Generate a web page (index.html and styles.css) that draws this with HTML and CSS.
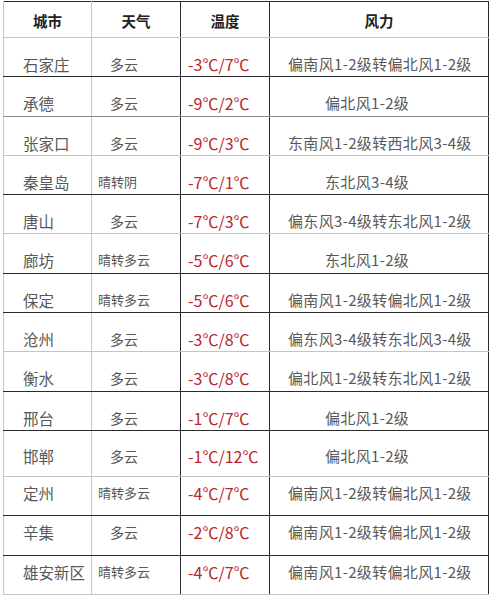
FILE: index.html
```html
<!DOCTYPE html>
<html lang="zh-CN">
<head>
<meta charset="utf-8">
<title>天气预报</title>
<link rel="stylesheet" href="styles.css">
</head>
<body>
<table class="wt">
  <colgroup>
    <col class="w1"><col class="w2"><col class="w3"><col class="w4">
  </colgroup>
  <thead>
    <tr class="head lt">
      <th class="c1">城市</th><th class="c2">天气</th><th class="c3">温度</th><th class="c4">风力</th>
    </tr>
  </thead>
  <tbody>
    <tr><td class="c1">石家庄</td><td class="c2 wx">多云</td><td class="c3">-3℃/7℃</td><td class="c4">偏南风1-2级转偏北风1-2级</td></tr>
    <tr class="md"><td class="c1">承德</td><td class="c2 wx">多云</td><td class="c3">-9℃/2℃</td><td class="c4 short">偏北风1-2级</td></tr>
    <tr class="lt"><td class="c1">张家口</td><td class="c2 wx">多云</td><td class="c3">-9℃/3℃</td><td class="c4">东南风1-2级转西北风3-4级</td></tr>
    <tr><td class="c1">秦皇岛</td><td class="c2 wx sm">晴转阴</td><td class="c3">-7℃/1℃</td><td class="c4 short">东北风3-4级</td></tr>
    <tr class="lt"><td class="c1">唐山</td><td class="c2 wx">多云</td><td class="c3">-7℃/3℃</td><td class="c4">偏东风3-4级转东北风1-2级</td></tr>
    <tr><td class="c1">廊坊</td><td class="c2 wx sm">晴转多云</td><td class="c3">-5℃/6℃</td><td class="c4 short">东北风1-2级</td></tr>
    <tr><td class="c1">保定</td><td class="c2 wx sm">晴转多云</td><td class="c3">-5℃/6℃</td><td class="c4">偏南风1-2级转偏北风1-2级</td></tr>
    <tr class="lt"><td class="c1">沧州</td><td class="c2 wx">多云</td><td class="c3">-3℃/8℃</td><td class="c4">偏东风3-4级转东北风3-4级</td></tr>
    <tr><td class="c1">衡水</td><td class="c2 wx">多云</td><td class="c3">-3℃/8℃</td><td class="c4">偏北风1-2级转东北风1-2级</td></tr>
    <tr><td class="c1">邢台</td><td class="c2 wx">多云</td><td class="c3">-1℃/7℃</td><td class="c4 short">偏北风1-2级</td></tr>
    <tr class="tall lt"><td class="c1">邯郸</td><td class="c2 wx">多云</td><td class="c3">-1℃/12℃</td><td class="c4 short">偏北风1-2级</td></tr>
    <tr class="late"><td class="c1">定州</td><td class="c2 wx sm">晴转多云</td><td class="c3">-4℃/7℃</td><td class="c4">偏南风1-2级转偏北风1-2级</td></tr>
    <tr class="late"><td class="c1">辛集</td><td class="c2 wx">多云</td><td class="c3">-2℃/8℃</td><td class="c4">偏南风1-2级转偏北风1-2级</td></tr>
    <tr class="late lt"><td class="c1">雄安新区</td><td class="c2 wx sm">晴转多云</td><td class="c3">-4℃/7℃</td><td class="c4">偏南风1-2级转偏北风1-2级</td></tr>
  </tbody>
</table>
</body>
</html>
```
FILE: styles.css
```css
html, body {
  margin: 0;
  padding: 0;
  background: #ffffff;
}

body {
  padding: 1px 0 0 3px;
  font-family: "Noto Sans CJK SC", "Noto Sans", sans-serif;
  color: #585858;
}

.wt {
  border-collapse: collapse;
  table-layout: fixed;
  width: 485px;
  border-top: 1px solid #2a2a2a;
}

.w1 { width: 88px; }
.w2 { width: 89px; }
.w3 { width: 89px; }
.w4 { width: 219px; }

.wt th,
.wt td {
  padding: 16px 0 0 0;
  vertical-align: top;
  text-align: left;
  white-space: nowrap;
  line-height: 20px;
  font-size: 15.5px;
  font-weight: 400;
  border-bottom: 1px solid #2a2a2a;
}

.wt tr { height: 39.3px; }

.wt tr.lt th,
.wt tr.lt td { border-bottom-color: #c4c4c4; }

.wt tr.md td { border-bottom-color: #8a8a8a; }

.wt .c1 {
  border-left: 1px solid #c8c8c8;
  border-right: 1px solid #c8c8c8;
  padding-left: 19px;
}

.wt .c2 { border-right: 1px solid #2a2a2a; }
.wt .c3 {
  border-right: 1px solid #2a2a2a;
  padding-left: 7px;
  color: #b8262c;
  font-size: 16px;
}
.wt .c4 {
  border-right: 1px solid #2a2a2a;
  padding-left: 18px;
  font-size: 15px;
  letter-spacing: 0.33px;
}

.wt td.wx { padding-left: 18px; font-size: 14px; }
.wt td.wx.sm { padding-left: 6px; font-size: 13px; }
.wt td.short { padding-left: 55px; }

.wt tr.head { height: 36px; }
.wt tr.head th {
  padding: 9px 0 0 0;
  text-align: center;
  font-size: 14.5px;
  font-weight: 700;
  letter-spacing: 0;
  color: #222222;
}

.wt tr.tall { height: 46px; }
.wt tr.tall td { padding-top: 15px; }

.wt tr.late td { padding-top: 6px; }
```
